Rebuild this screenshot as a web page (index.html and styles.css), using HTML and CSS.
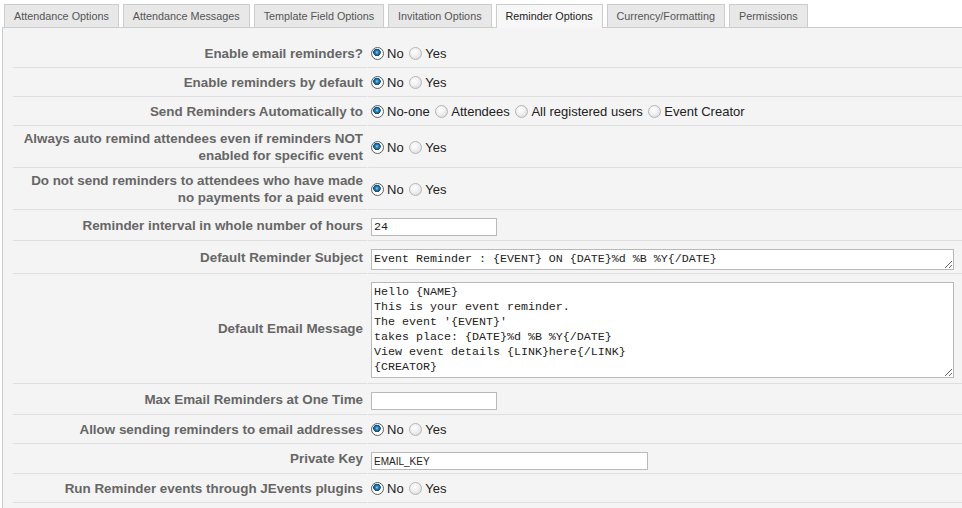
FILE: index.html
```html
<!DOCTYPE html>
<html>
<head>
    <link rel="stylesheet" href="styles.css">
</head>

<body>
    <ul class="tabs">
        <li>Attendance Options</li>
        <li>Attendance Messages</li>
        <li>Template Field Options</li>
        <li>Invitation Options</li>
        <li class="active">Reminder Options</li>
        <li>Currency/Formatting</li>
        <li>Permissions</li>
    </ul>

    <div class="panel">
        <table class="paramlist">
            <tr>
                <td class="key">Enable email reminders?</td>
                <td class="value">
                    <label><input type="radio" name="r1" checked>No</label>
                    <label><input type="radio" name="r1">Yes</label>
                </td>
            </tr>
            <tr>
                <td class="key">Enable reminders by default</td>
                <td class="value">
                    <label><input type="radio" name="r2" checked>No</label>
                    <label><input type="radio" name="r2">Yes</label>
                </td>
            </tr>
            <tr>
                <td class="key">Send Reminders Automatically to</td>
                <td class="value">
                    <label><input type="radio" name="r3" checked>No-one</label>
                    <label><input type="radio" name="r3">Attendees</label>
                    <label><input type="radio" name="r3">All registered users</label>
                    <label><input type="radio" name="r3">Event Creator</label>
                </td>
            </tr>
            <tr>
                <td class="key">Always auto remind attendees even if reminders NOT<br>enabled for specific event</td>
                <td class="value">
                    <label><input type="radio" name="r4" checked>No</label>
                    <label><input type="radio" name="r4">Yes</label>
                </td>
            </tr>
            <tr>
                <td class="key">Do not send reminders to attendees who have made<br>no payments for a paid event</td>
                <td class="value">
                    <label><input type="radio" name="r5" checked>No</label>
                    <label><input type="radio" name="r5">Yes</label>
                </td>
            </tr>
            <tr>
                <td class="key">Reminder interval in whole number of hours</td>
                <td class="value"><input type="text" class="short mono" value="24"></td>
            </tr>
            <tr>
                <td class="key">Default Reminder Subject</td>
                <td class="value"><textarea class="subject">Event Reminder : {EVENT} ON {DATE}%d %B %Y{/DATE}</textarea></td>
            </tr>
            <tr>
                <td class="key">Default Email Message</td>
                <td class="value"><textarea class="message">Hello {NAME}
This is your event reminder.
The event '{EVENT}'
takes place: {DATE}%d %B %Y{/DATE}
View event details {LINK}here{/LINK}
{CREATOR}</textarea></td>
            </tr>
            <tr>
                <td class="key">Max Email Reminders at One Time</td>
                <td class="value"><input type="text" class="short" value=""></td>
            </tr>
            <tr>
                <td class="key">Allow sending reminders to email addresses</td>
                <td class="value">
                    <label><input type="radio" name="r6" checked>No</label>
                    <label><input type="radio" name="r6">Yes</label>
                </td>
            </tr>
            <tr>
                <td class="key">Private Key</td>
                <td class="value"><input type="text" class="long key_input" value="EMAIL_KEY"></td>
            </tr>
            <tr>
                <td class="key">Run Reminder events through JEvents plugins</td>
                <td class="value">
                    <label><input type="radio" name="r7" checked>No</label>
                    <label><input type="radio" name="r7">Yes</label>
                </td>
            </tr>
        </table>
    </div>
</body>

</html>
```

FILE: styles.css
```css
/* General body styles */
body {
    font-family: "Liberation Sans", Arial, sans-serif;
    margin: 0;
    padding: 0;
    background-color: #fff;
    overflow: hidden;
}

/* Tab strip */
.tabs {
    list-style: none;
    display: flex;
    gap: 4px;
    margin: 0 0 0 4px;
    padding: 4px 0 0 0;
    position: relative;
    z-index: 1;
}

.tabs li {
    height: 22px;
    line-height: 22px;
    padding: 0 9px;
    font-size: 10.8px;
    color: #555;
    background-color: #e8e8e8;
    border: 1px solid #ccc;
    border-bottom: none;
}

.tabs li.active {
    color: #222;
    background-color: #f7f7f7;
    height: 23px;
    margin-bottom: -1px;
}

/* Settings panel */
.panel {
    width: 1000px;
    margin-left: 2px;
    padding: 11px 0 10px 10px;
    background-color: #f4f4f4;
    border: 1px solid #ccc;
}

.paramlist {
    width: 100%;
    border-collapse: separate;
    border-spacing: 0;
}

.paramlist td {
    padding: 5px 0 3px 0;
    border-bottom: 1px solid #dedede;
    vertical-align: middle;
}

.paramlist td.key {
    width: 350px;
    padding-right: 4px;
    text-align: right;
    font-size: 13.4px;
    line-height: 16.5px;
    font-weight: bold;
    color: #666;
}

.paramlist td.value {
    padding-left: 1px;
    font-size: 13px;
    line-height: 20px;
    color: #222;
    border-left: 2px solid #f4f4f4;
}

/* Radio buttons */
.value input[type="radio"] {
    appearance: none;
    width: 13px;
    height: 13px;
    margin: 0 3px 0 1px;
    vertical-align: -2px;
    border: 1px solid #b5b5b5;
    border-radius: 50%;
    background: radial-gradient(circle at 40% 35%, #fff 0, #f2f2f2 40%, #d4d4d4 100%);
}

.value label + label input[type="radio"] {
    margin-left: 2px;
}

.value input[type="radio"]:checked {
    border-color: #5e5e5e;
    background: radial-gradient(circle at 45% 40%, #9fd6f2 0, #2d84bd 1.5px, #0d4a7a 3.5px, #fff 4px, #fff 100%);
}

/* Text inputs */
.value input[type="text"],
.value textarea {
    display: block;
    box-sizing: border-box;
    margin: 3px 0 1px 1px;
    border: 1px solid #b9b9b9;
    background-color: #fff;
    color: #222;
}

.value input.short {
    width: 126px;
    height: 18px;
    padding: 0 2px;
}

.value input.long {
    width: 277px;
    height: 18px;
    padding: 0 2px;
    font-family: "Liberation Sans", Arial, sans-serif;
    font-size: 10px;
}

.value input.key_input {
    margin-bottom: 0;
}

.value .mono,
.value textarea {
    font-family: "Liberation Mono", "Courier New", monospace;
    font-size: 11.67px;
}

.value textarea {
    width: 583px;
    padding: 2px 2px;
    line-height: 15px;
    resize: both;
    overflow: hidden;
}

.value textarea.subject {
    height: 21px;
    margin-bottom: 0;
}

.value textarea.message {
    height: 96px;
    margin-bottom: 2px;
}
```
